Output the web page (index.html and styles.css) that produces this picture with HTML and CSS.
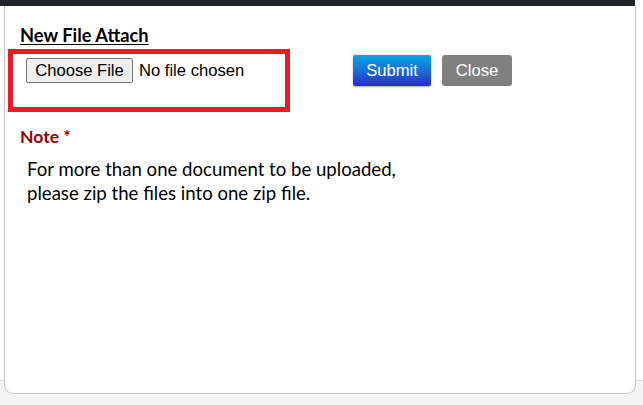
FILE: index.html
```html
<!DOCTYPE html>
<html lang="en">
<head>
<meta charset="utf-8">
<title>New File Attach</title>
<link rel="stylesheet" href="styles.css">
</head>
<body>
<div class="footer-band"></div>
<div class="topbar"></div>
<main class="card">
  <h2 class="title">New File Attach</h2>
  <div class="upload-row">
    <div class="highlight">
      <label class="file-field">
        <span class="file-btn">Choose File</span>
        <span class="file-name">No file chosen</span>
        <input type="file" class="file-input">
      </label>
    </div>
    <div class="actions">
      <button class="btn btn-submit" type="button">Submit</button>
      <button class="btn btn-close" type="button">Close</button>
    </div>
  </div>
  <h3 class="note">Note *</h3>
  <p class="note-text">For more than one document to be uploaded,<br>please zip the files into one zip file.</p>
</main>
</body>
</html>
```
FILE: styles.css
```css
html, body {
  margin: 0;
  padding: 0;
  background: #ffffff;
}
body {
  position: relative;
  width: 643px;
  height: 405px;
  overflow: hidden;
  font-family: "Lato", "Open Sans", sans-serif;
}
.footer-band {
  position: absolute;
  left: 0;
  right: 0;
  top: 380px;
  bottom: 0;
  background: #f5f5f5;
  border-top: 1px solid #dcdcdc;
}
.topbar {
  position: relative;
  z-index: 2;
  width: 635px;
  height: 6px;
  background: #212529;
}
.card {
  position: relative;
  z-index: 1;
  margin-left: 4px;
  width: 632px;
  height: 388px;
  box-sizing: border-box;
  background: #ffffff;
  border: 1px solid #c4c4c4;
  border-top: none;
  border-radius: 0 0 9px 9px;
  padding-top: 18px;
}
.title {
  margin: 0 0 0 15px;
  font-size: 18.3px;
  line-height: 22px;
  font-weight: 700;
  color: #000;
  text-decoration: underline;
  text-underline-offset: 2px;
}
.upload-row {
  display: flex;
  align-items: flex-start;
  margin-top: 3px;
  margin-left: 3px;
}
.highlight {
  box-sizing: border-box;
  width: 282px;
  height: 63px;
  border: 5px solid #ed1c24;
  padding: 4px 0 0 13px;
}
.file-field {
  display: flex;
  align-items: center;
  font-family: "Liberation Sans", Arial, sans-serif;
  font-size: 16.6px;
  color: #000;
}
.file-btn {
  box-sizing: border-box;
  width: 107px;
  height: 25px;
  display: inline-flex;
  align-items: center;
  justify-content: center;
  background: #efefef;
  border: 1px solid #767676;
  border-radius: 2px;
}
.file-name {
  margin-left: 6px;
}
.file-input {
  display: none;
}
.actions {
  display: flex;
  gap: 11px;
  margin-left: 63px;
  margin-top: 6px;
}
.btn {
  box-sizing: border-box;
  height: 31px;
  border: none;
  font-family: "Liberation Sans", Arial, sans-serif;
  font-size: 16.6px;
  color: #ffffff;
  padding: 0;
}
.btn-submit {
  width: 78px;
  border-radius: 2px;
  background: linear-gradient(to bottom, #06a7e2 0%, #1a6fd6 50%, #2a2cc6 100%);
  box-shadow: 0 1px 2px rgba(0,0,0,0.35);
}
.btn-close {
  width: 70px;
  border-radius: 3px;
  background: #808080;
}
.note {
  margin: 14px 0 0 15px;
  font-size: 17.6px;
  line-height: 22px;
  font-weight: 700;
  color: #990000;
}
.note-text {
  margin: 9px 0 0 22px;
  font-size: 18.6px;
  line-height: 24px;
  color: #000;
}
```
